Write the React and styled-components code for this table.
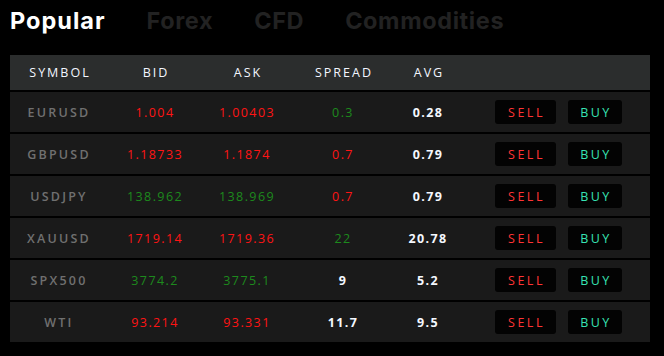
import React from "react";
import styled, { createGlobalStyle } from "styled-components";

const Global = createGlobalStyle`
  html, body { margin: 0; padding: 0; background: #000; }
  body { font-family: "Open Sans", "Liberation Sans", sans-serif; }
`;

const Page = styled.div`
  width: 664px;
  height: 356px;
  background: #000;
  padding: 0 14px 0 10px;
  box-sizing: border-box;
  overflow: hidden;
`;

const Tabs = styled.div`
  display: flex;
  gap: 41px;
  height: 55px;
  align-items: flex-start;
  padding-top: 5px;
  box-sizing: border-box;
`;

const Tab = styled.div`
  font-family: "Inter", sans-serif;
  font-weight: 700;
  font-size: 23.5px;
  line-height: 32px;
  color: ${(p) => (p.$active ? "#ffffff" : "#222222")};
  letter-spacing: ${(p) => (p.$active ? 1 : 0.6)}px;
`;

const Table = styled.div`
  display: flex;
  flex-direction: column;
  gap: 2px;
`;

const Grid = styled.div`
  display: grid;
  grid-template-columns: 98px 94px 90px 102px 68px 1fr;
  align-items: center;
  height: ${(p) => (p.$head ? 35 : 40)}px;
  background: ${(p) => (p.$head ? "#2b2d2d" : "#1a1a1a")};
`;

const HeadCell = styled.div`
  text-align: center;
  color: #f2f6ff;
  font-family: "Open Sans", sans-serif;
  font-weight: 500;
  font-size: 12.5px;
  letter-spacing: 2px;
  padding-left: 2px;
`;

const Cell = styled.div`
  text-align: center;
  color: ${(p) => p.$color};
  font-family: "Open Sans", sans-serif;
  font-weight: ${(p) => p.$weight || 500};
  font-size: 12.5px;
  letter-spacing: ${(p) => (p.$wide ? 2.2 : 1.4)}px;
`;

const Actions = styled.div`
  display: flex;
  gap: 12px;
  padding-left: 33px;
`;

const Btn = styled.button`
  width: ${(p) => p.$w}px;
  height: 24px;
  border: none;
  border-radius: 3px;
  background: #030303;
  color: ${(p) => p.$color};
  font-family: "Open Sans", sans-serif;
  font-weight: 500;
  font-size: 12.5px;
  letter-spacing: 2.5px;
  padding: 0 0 0 2px;
  cursor: pointer;
`;

const RED = "#ff1414";
const GREEN = "#1d8a1d";
const WHITE = "#f4f8ff";

const rows = [
  ["EURUSD", "1.004", RED, "1.00403", RED, "0.3", GREEN, "0.28"],
  ["GBPUSD", "1.18733", RED, "1.1874", RED, "0.7", RED, "0.79"],
  ["USDJPY", "138.962", GREEN, "138.969", GREEN, "0.7", RED, "0.79"],
  ["XAUUSD", "1719.14", RED, "1719.36", RED, "22", GREEN, "20.78"],
  ["SPX500", "3774.2", GREEN, "3775.1", GREEN, "9", WHITE, "5.2"],
  ["WTI", "93.214", RED, "93.331", RED, "11.7", WHITE, "9.5"],
];

export default function App() {
  return (
    <Page>
      <Global />
      <Tabs>
        <Tab $active>Popular</Tab>
        <Tab>Forex</Tab>
        <Tab>CFD</Tab>
        <Tab>Commodities</Tab>
      </Tabs>
      <Table>
        <Grid $head>
          <HeadCell>SYMBOL</HeadCell>
          <HeadCell>BID</HeadCell>
          <HeadCell>ASK</HeadCell>
          <HeadCell>SPREAD</HeadCell>
          <HeadCell>AVG</HeadCell>
          <div />
        </Grid>
        {rows.map((r) => (
          <Grid key={r[0]}>
            <Cell $color="#707070" $weight={600} $wide>{r[0]}</Cell>
            <Cell $color={r[2]}>{r[1]}</Cell>
            <Cell $color={r[4]}>{r[3]}</Cell>
            <Cell $color={r[6]} $weight={r[6] === WHITE ? 700 : 500}>{r[5]}</Cell>
            <Cell $color={WHITE} $weight={700}>{r[7]}</Cell>
            <Actions>
              <Btn $w={61} $color="#ff3434">SELL</Btn>
              <Btn $w={54} $color="#37e3b4">BUY</Btn>
            </Actions>
          </Grid>
        ))}
      </Table>
    </Page>
  );
}
